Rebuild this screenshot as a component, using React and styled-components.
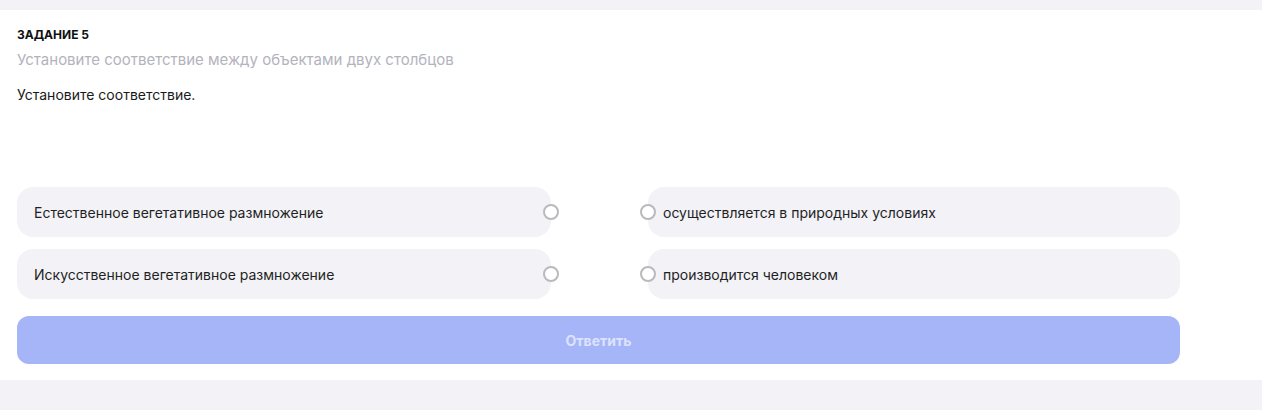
import React from "react";
import styled, { createGlobalStyle } from "styled-components";

const Global = createGlobalStyle`
  html, body { margin: 0; padding: 0; background: #f2f2f7; }
  body { font-family: Inter, "Noto Sans", sans-serif; -webkit-font-smoothing: antialiased; }
`;

const Page = styled.div`
  padding: 10px 0 30px;
  background: #f2f2f7;
`;

const Panel = styled.section`
  background: #ffffff;
  padding: 17px 17px 16px;
`;

const Content = styled.div`
  width: 1163px;
`;

const Title = styled.div`
  font-size: 12px;
  line-height: 16px;
  font-weight: 700;
  color: #111;
  text-transform: uppercase;
`;

const Subtitle = styled.div`
  margin-top: 7px;
  font-size: 15px;
  line-height: 20px;
  color: #b3b3bd;
`;

const Prompt = styled.div`
  margin-top: 16px;
  font-size: 14px;
  line-height: 18px;
  color: #1a1a1a;
`;

const Rows = styled.div`
  margin-top: 83px;
  display: flex;
  flex-direction: column;
  gap: 12px;
`;

const Row = styled.div`
  display: grid;
  grid-template-columns: 534px 1fr 532px;
`;

const Card = styled.div`
  position: relative;
  grid-column: ${(p) => (p.$side === "right" ? 3 : 1)};
  height: 50px;
  display: flex;
  align-items: center;
  background: #f2f2f7;
  border-radius: 16px;
  padding-left: ${(p) => (p.$side === "right" ? "15px" : "17px")};
  font-size: 14px;
  color: #1f1f24;
  box-sizing: border-box;
`;

const Dot = styled.span`
  position: absolute;
  top: 50%;
  ${(p) => (p.$side === "right" ? "left: -8px;" : "right: -8px;")}
  width: 16px;
  height: 16px;
  margin-top: -8px;
  border-radius: 50%;
  border: 2px solid #b9b9be;
  background: #fff;
  box-sizing: border-box;
`;

const Submit = styled.button`
  margin-top: 17px;
  width: 100%;
  height: 48px;
  border: none;
  border-radius: 12px;
  background: #a6b5f8;
  color: #dde3fd;
  font-family: Inter, "Noto Sans", sans-serif;
  font-size: 14px;
  font-weight: 700;
  cursor: default;
`;

const pairs = [
  ["Естественное вегетативное размножение", "осуществляется в природных условиях"],
  ["Искусственное вегетативное размножение", "производится человеком"],
];

export default function App() {
  return (
    <>
      <Global />
      <Page>
        <Panel>
          <Content>
            <Title>Задание 5</Title>
            <Subtitle>Установите соответствие между объектами двух столбцов</Subtitle>
            <Prompt>Установите соответствие.</Prompt>
            <Rows>
              {pairs.map(([l, r]) => (
                <Row key={l}>
                  <Card $side="left">
                    {l}
                    <Dot $side="left" />
                  </Card>
                  <Card $side="right">
                    <Dot $side="right" />
                    {r}
                  </Card>
                </Row>
              ))}
            </Rows>
            <Submit>Ответить</Submit>
          </Content>
        </Panel>
      </Page>
    </>
  );
}
